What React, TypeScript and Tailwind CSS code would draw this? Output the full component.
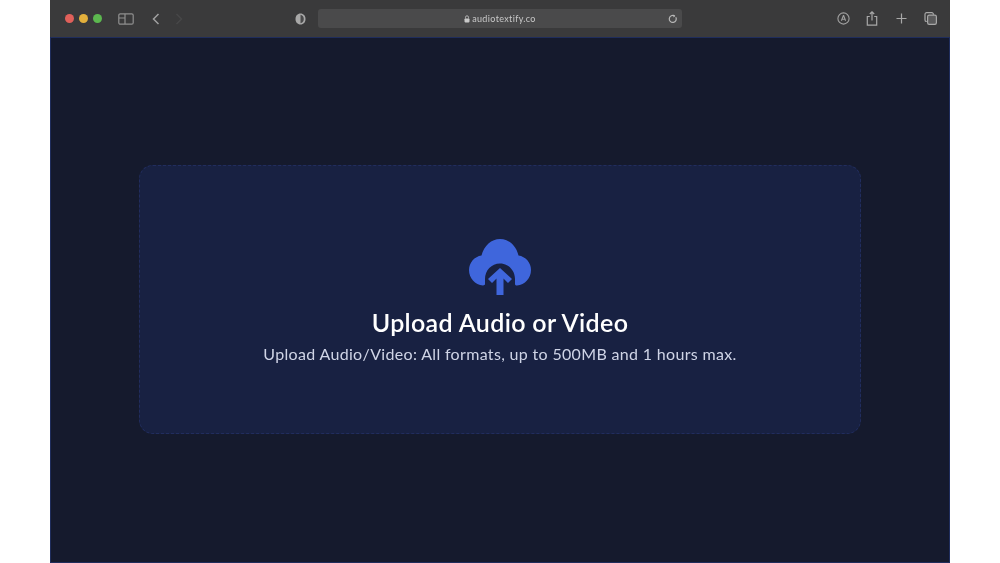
const Toolbar = () => (
    <div className="flex h-[37px] items-center bg-[#3a3a3b] text-[#a8a8a8]">
        <div className="ml-[15px] flex gap-[5px]">
            <span className="size-[9px] rounded-full bg-[#e0605a]" />
            <span className="size-[9px] rounded-full bg-[#e3b03c]" />
            <span className="size-[9px] rounded-full bg-[#5cb84f]" />
        </div>
        <svg className="ml-[16px]" width="16" height="12" viewBox="0 0 16 12" fill="none" stroke="#8f8f8f" strokeWidth="1.2">
            <rect x="0.8" y="0.8" width="14.4" height="10.4" rx="1.5" />
            <path d="M7 1v10M1 5h6" />
        </svg>
        <svg className="ml-[18px]" width="8" height="12" viewBox="0 0 8 12" fill="none" stroke="#a0a0a0" strokeWidth="1.5">
            <path d="M6.5 1 1.5 6l5 5" />
        </svg>
        <svg className="ml-[15px]" width="8" height="12" viewBox="0 0 8 12" fill="none" stroke="#474748" strokeWidth="1.5">
            <path d="M1.5 1l5 5-5 5" />
        </svg>
        <svg className="ml-[112px]" width="11" height="12" viewBox="0 0 11 12">
            <path d="M5.500 0.500C2.500 0.500 0.500 2.800 0.500 6s2 5.500 5 5.500 5-2.300 5-5.500-2-5.500-5-5.500Z" fill="#a8a8a8" />
            <path d="M5.500 1.800v8.400c1.700-.3 3.300-1.800 3.300-4.200S7.200 2.100 5.500 1.800Z" fill="#4a4a4b" />
        </svg>
        <div className="ml-[12px] flex h-[19px] w-[364px] items-center rounded-[3px] bg-[#4a4a4b] pr-[4px]">
            <div className="flex flex-1 items-center justify-center gap-[2px] pl-[14px] text-[9px] leading-none tracking-[0.35px] text-[#c9c9c9]">
                <svg width="6" height="8" viewBox="0 0 6 8" fill="#c9c9c9">
                    <rect x="0.500" y="3.400" width="5" height="4" rx="0.800" />
                    <path d="M1.500 3.500V2.300a1.500 1.500 0 0 1 3 0v1.200" fill="none" stroke="#c9c9c9" strokeWidth="0.800" />
                </svg>
                <span>audiotextify.co</span>
            </div>
            <svg width="10" height="10" viewBox="0 0 10 10" fill="none" stroke="#b8b8b8" strokeWidth="1.200">
                <path d="M7.800 3.200a3.500 3.500 0 1 1-1.300-1.300" />
                <path d="M5.500 0.400 7.300 2 5.500 3.400Z" fill="#b8b8b8" stroke="none" />
            </svg>
        </div>
        <svg className="ml-[155px]" width="13" height="13" viewBox="0 0 13 13" fill="none" stroke="#a0a0a0" strokeWidth="1.100">
            <circle cx="6.500" cy="6.500" r="5.600" />
            <path d="M6.500 3.200 4.400 8.800M6.500 3.200l2.100 5.600M5 7.300h3" />
        </svg>
        <svg className="ml-[16px]" width="12" height="15" viewBox="0 0 12 15" fill="none" stroke="#a8a8a8" strokeWidth="1.200">
            <path d="M3.800 5.500H1.300v8.700h9.400V5.500H8.200M6 9.500V1M3.800 3 6 .9 8.200 3" />
        </svg>
        <svg className="ml-[18px]" width="11" height="11" viewBox="0 0 11 11" fill="none" stroke="#a8a8a8" strokeWidth="1.200">
            <path d="M5.500 0.500v10M0.500 5.500h10" />
        </svg>
        <svg className="ml-[17px]" width="13" height="13" viewBox="0 0 13 13" fill="none" stroke="#a8a8a8" strokeWidth="1.200">
            <rect x="3.600" y="3.200" width="8.800" height="9.200" rx="1.600" fill="#5a5a5b" />
            <path d="M2.800 9.500h-.2A1.600 1.600 0 0 1 1 7.900V2.200A1.600 1.600 0 0 1 2.600.6h5.200A1.600 1.600 0 0 1 9.400 2.200v.6" />
        </svg>
    </div>
);

const UploadCloud = () => (
    <svg width="62" height="58" viewBox="0 0 62 58">
        <path
            d="M14 47.500C6 47 0 40 0 32 0 24.500 5.500 18.500 12.500 17.500 15 7.500 22.500 1 31 1s16 6.500 18.500 16.500C56.500 18.500 62 24.500 62 32c0 8-6 15-14 15.500-1-.1-2-.3-2-1.500V41C46 32.500 39.500 25.500 31 25.500S16 32.500 16 41v5c0 1-1 1.400-2 1.500Z"
            fill="#3f66dc"
        />
        <path d="M31 30 43 41 39 45 34.500 40.500V57H27.500V40.500L23 45 19 41Z" fill="#3f66dc" />
    </svg>
);

export default function App() {
    return (
        <div className="h-[563px] w-[1000px] overflow-hidden bg-white px-[50px] font-['Lato',sans-serif]">
            <div className="flex h-full flex-col blur-[0.4px]">
                <Toolbar />
                <div className="flex flex-1 flex-col items-center border border-[#1f2d5c] bg-[#151a2d] pt-[127px]">
                    <div className="flex h-[269px] w-[722px] flex-col items-center rounded-[14px] border border-dashed border-[#212d5e] bg-[#182142] pt-[72px]">
                        <UploadCloud />
                        <h1 className="mt-[11px] text-[25px] leading-[30px] font-semibold tracking-[0.33px] text-white">Upload Audio or Video</h1>
                        <p className="mt-[7px] text-[16px] leading-[20px] tracking-[0.33px] text-[#cfd4e6]">
                            Upload Audio/Video: All formats, up to 500MB and 1 hours max.
                        </p>
                    </div>
                </div>
            </div>
        </div>
    );
}
